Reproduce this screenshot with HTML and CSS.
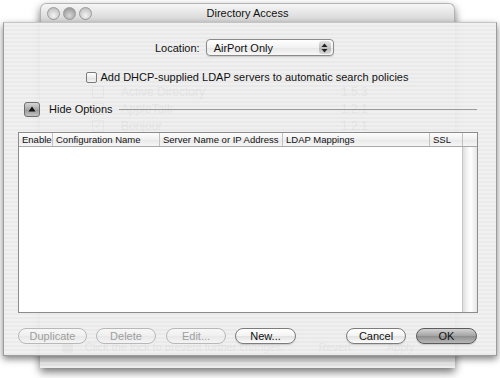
FILE: index.html
```html
<!DOCTYPE html>
<html>
<head>
    <title>Directory Access</title>
    <meta charset="utf-8">
    <link rel="stylesheet" href="styles.css">
</head>
<body>
    <div class="desk">
        <!-- window behind the sheet -->
        <div class="backwin">
            <div class="titlebar">
                <div class="lights"><span></span><span class="mid"></span><span></span></div>
                <div class="title">Directory Access</div>
            </div>
            <div class="backbody">
                <div class="svc-list">
                    <div class="svc"><span class="svc-check"></span><span class="svc-name">Active Directory</span><span class="svc-ver">1.5.3</span></div>
                    <div class="svc"><span class="svc-check"></span><span class="svc-name">AppleTalk</span><span class="svc-ver">1.2.1</span></div>
                    <div class="svc"><span class="svc-check">✓</span><span class="svc-name">Bonjour</span><span class="svc-ver">1.2.1</span></div>
                </div>
                <div class="lockbar">
                    <span class="lock"></span>
                    <span class="lock-text">Click the lock to prevent further changes.</span>
                    <span class="back-btn">Revert</span>
                    <span class="back-btn">Apply</span>
                </div>
            </div>
        </div>

        <!-- the sheet -->
        <div class="sheet">
            <div class="loc-row">
                <span>Location:</span>
                <div class="popup">
                    <span class="popup-text">AirPort Only</span>
                    <span class="popup-arrows">
                        <svg width="7" height="10" viewBox="0 0 7 10"><path d="M3.5 0.5 L6.5 4 L0.5 4 Z M3.5 9.5 L6.5 6 L0.5 6 Z" fill="#222"/></svg>
                    </span>
                </div>
            </div>

            <div class="check-row">
                <span class="checkbox"></span>
                <span>Add DHCP-supplied LDAP servers to automatic search policies</span>
            </div>

            <div class="opts-row">
                <span class="disclose">
                    <svg width="8" height="6" viewBox="0 0 8 6"><path d="M4 0.5 L7.5 5.5 L0.5 5.5 Z" fill="#111"/></svg>
                </span>
                <span class="opts-label">Hide Options</span>
                <span class="opts-line"></span>
            </div>

            <div class="table">
                <div class="thead">
                    <span class="th c-enable">Enable</span>
                    <span class="th c-name">Configuration Name</span>
                    <span class="th c-server">Server Name or IP Address</span>
                    <span class="th c-ldap">LDAP Mappings</span>
                    <span class="th c-ssl">SSL</span>
                    <span class="th c-corner"></span>
                </div>
                <div class="tbody">
                    <div class="rows"></div>
                    <div class="vscroll"></div>
                </div>
            </div>

            <div class="btn-row">
                <button class="btn off w-dup">Duplicate</button>
                <button class="btn off w-del">Delete</button>
                <button class="btn off w-edit">Edit...</button>
                <button class="btn w-new">New...</button>
                <span class="spacer"></span>
                <button class="btn w-cancel">Cancel</button>
                <button class="btn default w-ok">OK</button>
            </div>
        </div>
    </div>
</body>
</html>
```

FILE: styles.css
```css
html, body {
    margin: 0;
    padding: 0;
    background: #fff;
    overflow: hidden;
}

.desk {
    position: relative;
    width: 500px;
    height: 378px;
    font-family: 'Liberation Sans', Arial, sans-serif;
    font-size: 11px;
    color: #111;
}

/* ---- window behind ---- */
.backwin {
    margin: 3px 0 0 40px;
    width: 415px;
    height: 365px;
    display: flex;
    flex-direction: column;
    border-radius: 6px 6px 0 0;
    box-shadow: 0 4px 9px rgba(0, 0, 0, 0.55);
}

.titlebar {
    height: 18px;
    position: relative;
    border-radius: 6px 6px 0 0;
    border: 1px solid #b4b4b4;
    border-bottom: none;
    background: linear-gradient(#f6f6f6, #e2e2e2 60%, #d6d6d6);
}

.lights {
    display: flex;
    gap: 3px;
    padding: 3px 0 0 6px;
}

.lights span {
    width: 11px;
    height: 11px;
    border-radius: 50%;
    border: 1px solid #9a9a9a;
    background: radial-gradient(circle at 50% 70%, #f4f4f4, #c8c8c8 70%, #b0b0b0);
}

.lights .mid {
    background: radial-gradient(circle at 50% 70%, #d8d8d8, #a2a2a2 70%, #888);
}

.title {
    position: absolute;
    top: 3px;
    left: 0;
    right: 0;
    text-align: center;
    font-size: 11px;
}

.backbody {
    flex: 1;
    display: flex;
    flex-direction: column;
    background: repeating-linear-gradient(#eeeeee 0 2px, #e6e6e6 2px 4px);
}

.svc-list {
    padding: 61px 0 0 52px;
}

.svc {
    display: flex;
    align-items: center;
    height: 17px;
    color: #555;
    font-size: 12px;
}

.svc-check {
    width: 10px;
    height: 10px;
    border: 1px solid #777;
    font-size: 10px;
    line-height: 10px;
    text-align: center;
}

.svc-name {
    margin-left: 17px;
    width: 220px;
}

.lockbar {
    margin-top: auto;
    display: flex;
    align-items: center;
    height: 14px;
    padding: 0 0 14px 22px;
    color: #555;
    font-size: 11px;
}

.lock {
    width: 11px;
    height: 12px;
    background: #888;
    border-radius: 2px;
}

.lock-text {
    margin-left: 12px;
    width: 240px;
}

.back-btn {
    width: 70px;
}

/* ---- sheet ---- */
.sheet {
    position: absolute;
    left: 3px;
    top: 19px;
    width: 494px;
    height: 334px;
    box-sizing: border-box;
    border: 1px solid #9c9c9c;
    border-top-color: #c4c4c4;
    background: repeating-linear-gradient(rgba(240, 240, 240, 0.93) 0 2px, rgba(233, 233, 233, 0.93) 2px 4px);
    box-shadow: 0 3px 7px rgba(0, 0, 0, 0.5);
    display: flex;
    flex-direction: column;
}

.loc-row {
    display: flex;
    align-items: center;
    gap: 6px;
    height: 17px;
    margin-top: 16px;
    padding-left: 151px;
}

.popup {
    width: 128px;
    height: 17px;
    box-sizing: border-box;
    display: flex;
    align-items: center;
    border: 1px solid #8a8a8a;
    border-radius: 4px;
    background: linear-gradient(#ffffff, #f2f2f2 50%, #e6e6e6 51%, #f8f8f8);
    box-shadow: 0 1px 1px rgba(0, 0, 0, 0.15);
}

.popup-text {
    flex: 1;
    padding-left: 7px;
}

.popup-arrows {
    width: 12px;
    height: 13px;
    margin-right: 2px;
    display: flex;
    align-items: center;
    justify-content: center;
    border-radius: 3px;
    background: linear-gradient(#e4e4e4, #c4c4c4 50%, #b6b6b6 51%, #d8d8d8);
}

.check-row {
    display: flex;
    align-items: center;
    justify-content: center;
    gap: 4px;
    height: 12px;
    margin-top: 15px;
    padding-right: 6px;
}

.checkbox {
    width: 11px;
    height: 11px;
    box-sizing: border-box;
    border: 1px solid #7a7a7a;
    border-radius: 2px;
    background: linear-gradient(#fff, #ececec 50%, #dedede 51%, #f6f6f6);
}

.opts-row {
    display: flex;
    align-items: center;
    height: 16px;
    margin-top: 18px;
    padding: 0 19px 0 20px;
}

.disclose {
    width: 16px;
    height: 15px;
    box-sizing: border-box;
    display: flex;
    align-items: center;
    justify-content: center;
    border: 1px solid #6e6e6e;
    border-radius: 3px;
    background: linear-gradient(#d6d6d6, #a8a8a8 50%, #989898 51%, #c2c2c2);
}

.opts-label {
    margin-left: 9px;
}

.opts-line {
    flex: 1;
    height: 1px;
    margin-left: 6px;
    background: #9a9a9a;
}

.table {
    margin: 15px 0 0 14px;
    width: 460px;
    height: 181px;
    box-sizing: border-box;
    border: 1px solid #8c8c8c;
    background: #fff;
    display: flex;
    flex-direction: column;
}

.thead {
    display: flex;
    height: 13px;
    border-bottom: 1px solid #a8a8a8;
    background: linear-gradient(#fdfdfd, #f0f0f0 50%, #e8e8e8 51%, #f6f6f6);
    font-size: 9.5px;
    line-height: 13px;
}

.th {
    box-sizing: border-box;
    padding-left: 3px;
    border-right: 1px solid #c2c2c2;
    white-space: nowrap;
    overflow: hidden;
}

.c-enable { width: 34px; }
.c-name { width: 107px; }
.c-server { width: 123px; }
.c-ldap { width: 147px; }
.c-ssl { width: 33px; }
.c-corner { flex: 1; border-right: none; }

.tbody {
    flex: 1;
    display: flex;
}

.rows {
    flex: 1;
}

.vscroll {
    width: 14px;
    border-left: 1px solid #c6c6c6;
    background: linear-gradient(to right, #dedede, #f4f4f4 30%, #ffffff 55%, #e6e6e6);
}

.btn-row {
    display: flex;
    align-items: center;
    height: 16px;
    margin-top: 15px;
    padding: 0 19px 0 14px;
}

.btn {
    height: 16px;
    box-sizing: border-box;
    padding: 0;
    margin-right: 9px;
    font-family: inherit;
    font-size: 11px;
    line-height: 13px;
    color: #111;
    border: 1px solid #7c7c7c;
    border-radius: 8px;
    background: linear-gradient(#ffffff, #f3f3f3 50%, #e2e2e2 51%, #fbfbfb);
    box-shadow: 0 1px 1px rgba(0, 0, 0, 0.15);
}

.btn.off {
    color: #9e9e9e;
    border-color: #b8b8b8;
    box-shadow: none;
    background: linear-gradient(#f7f7f7, #efefef 50%, #e8e8e8 51%, #f4f4f4);
}

.btn.default {
    margin-right: 0;
    border-color: #5c5c5c;
    background: linear-gradient(#d2d2d2, #a4a4a4 50%, #8e8e8e 51%, #b8b8b8);
}

.w-dup { width: 69px; }
.w-del { width: 60px; margin-right: 10px; }
.w-edit { width: 60px; }
.w-new { width: 61px; }
.w-cancel { width: 60px; margin-right: 10px; }
.w-ok { width: 61px; }

.spacer {
    flex: 1;
}
```
